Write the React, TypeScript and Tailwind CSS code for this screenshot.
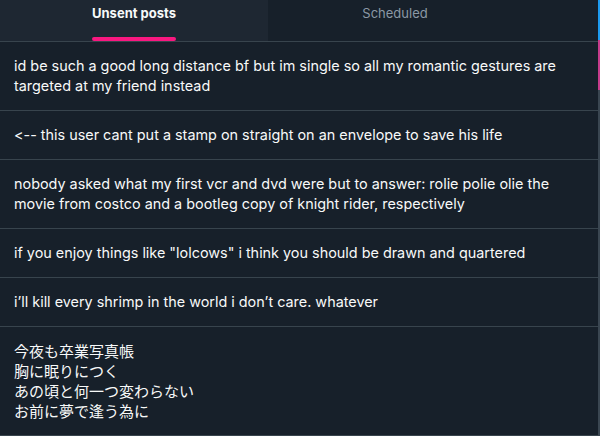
import React from "react";

const posts = [
  "id be such a good long distance bf but im single so all my romantic gestures are targeted at my friend instead",
  "<-- this user cant put a stamp on straight on an envelope to save his life",
  "nobody asked what my first vcr and dvd were but to answer: rolie polie olie the movie from costco and a bootleg copy of knight rider, respectively",
  "if you enjoy things like \"lolcows\" i think you should be drawn and quartered",
  "i\u2019ll kill every shrimp in the world i don\u2019t care. whatever",
];

const lyric = "今夜も卒業写真帳\n胸に眠りにつく\nあの頃と何一つ変わらない\nお前に夢で逢う為に";

export default function App() {
  return (
    <div
      className="w-[600px] h-[436px] overflow-hidden flex bg-[#17202a] text-[#f7f9f9] [font-feature-settings:'calt'_0,'liga'_0]"
      style={{ fontFamily: 'Inter, "Noto Sans CJK JP", sans-serif' }}
    >
      <div className="w-[598px] flex flex-col">
        {/* Tabs */}
        <div className="flex h-[42px] border-b border-[#38444d]">
          <div className="w-[268px] bg-[#1e2732] flex flex-col items-center">
            <div className="flex flex-col items-stretch h-full">
              <span className="mt-[3px] text-[13px] leading-[20px] font-bold">Unsent posts</span>
              <div className="mt-auto h-1 rounded-full bg-[#f91880]" />
            </div>
          </div>
          <div className="w-[254px] flex justify-center">
            <span className="mt-[3px] text-[13px] leading-[20px] text-[#8b98a5]">Scheduled</span>
          </div>
          <div className="flex-1" />
        </div>

        {/* Unsent posts */}
        {posts.map((p, i) => (
          <div
            key={i}
            className="px-[14px] py-[14px] border-b border-[#38444d] text-[14.4px] leading-[20px]"
          >
            {p}
          </div>
        ))}
        <div
          className="px-[14px] py-[14px] border-b border-[#38444d] text-[15px] leading-[20px] whitespace-pre-line"
          style={{ fontFamily: '"Noto Sans CJK JP", sans-serif' }}
        >
          {lyric}
        </div>
      </div>
      <div className="w-[2px] flex flex-col">
        <div className="h-[40px] bg-[#1d9bf0]" />
        <div className="h-[50px] bg-[#c73c8c]" />
        <div className="flex-1 bg-[#3a4651]" />
      </div>
    </div>
  );
}
